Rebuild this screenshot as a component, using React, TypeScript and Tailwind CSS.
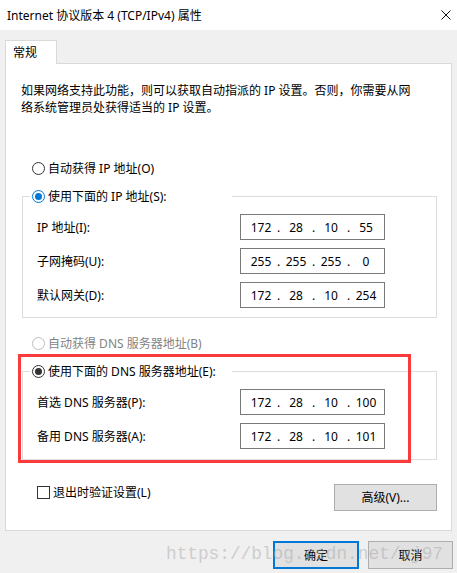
import React from 'react';

type RadioKind = 'off' | 'blue' | 'dark' | 'disabled';

function Radio({ kind }: { kind: RadioKind }) {
  const ring =
    kind === 'blue'
      ? 'border-[#0078d7]'
      : kind === 'disabled'
        ? 'border-[#bcbcbc]'
        : 'border-[#333333]';
  return (
    <span className={`flex h-[13px] w-[13px] shrink-0 items-center justify-center rounded-full border bg-white ${ring}`}>
      {kind === 'blue' && <span className="h-[7px] w-[7px] rounded-full bg-[#0078d7]" />}
      {kind === 'dark' && <span className="h-[7px] w-[7px] rounded-full bg-[#333333]" />}
    </span>
  );
}

function IpBox({ parts }: { parts: string[] }) {
  return (
    <div className="flex h-[26px] w-[145px] items-center border border-[#7a7a7a] bg-white pl-[6px]">
      {parts.map((p, i) => (
        <React.Fragment key={i}>
          {i > 0 && <span className="w-[7px] text-center">.</span>}
          <span className="w-[28px] text-center">{p}</span>
        </React.Fragment>
      ))}
    </div>
  );
}

function Row({ label, parts }: { label: string; parts: string[] }) {
  return (
    <div className="flex h-[26px] items-center pl-[14px]">
      <span className="w-[203px] whitespace-nowrap">{label}</span>
      <IpBox parts={parts} />
    </div>
  );
}

export default function App() {
  return (
    <div className="relative h-[573px] w-[457px] overflow-hidden bg-[#f0f0f0] font-['Noto_Sans','Noto_Sans_CJK_SC',sans-serif] text-[12px] leading-[17px] text-black">
      {/* title bar */}
      <div className="flex h-[30px] items-center justify-between bg-white pl-[7px] pr-[6px]">
        <span>Internet 协议版本 4 (TCP/IPv4) 属性</span>
        <svg width="10" height="10" viewBox="0 0 10 10">
          <path d="M0.5 0.5 L9.5 9.5 M9.5 0.5 L0.5 9.5" stroke="#111" strokeWidth="1" />
        </svg>
      </div>

      <div className="px-[5px] pt-[10px]">
        {/* tab */}
        <div className="relative z-10 -mb-px flex h-[24px] w-[52px] items-center border border-b-0 border-[#d9d9d9] bg-white pl-[7px]">
          常规
        </div>

        {/* panel */}
        <div className="h-[468px] border border-[#d9d9d9] bg-white">
          <p className="pl-[15px] pt-[18px] whitespace-nowrap">
            如果网络支持此功能，则可以获取自动指派的 IP 设置。否则，你需要从网
            <br />
            络系统管理员处获得适当的 IP 设置。
          </p>

          <div className="ml-[26px] mt-[44px] flex h-[17px] items-center gap-[3px]">
            <Radio kind="off" />
            <span>自动获得 IP 地址(O)</span>
          </div>

          <fieldset className="ml-[16px] mr-[14px] mt-[11px] border border-[#dcdcdc] pb-[9px]">
            <legend className="ml-[7px] flex h-[17px] w-[202px] items-center gap-[3px] pl-[2px]">
              <Radio kind="blue" />
              <span>使用下面的 IP 地址(S):</span>
            </legend>
            <div className="flex flex-col gap-[8px] pt-[9px]">
              <Row label="IP 地址(I):" parts={['172', '28', '10', '55']} />
              <Row label="子网掩码(U):" parts={['255', '255', '255', '0']} />
              <Row label="默认网关(D):" parts={['172', '28', '10', '254']} />
            </div>
          </fieldset>

          <div className="ml-[26px] mt-[17px] flex h-[17px] items-center gap-[3px] text-[#838383]">
            <Radio kind="disabled" />
            <span>自动获得 DNS 服务器地址(B)</span>
          </div>

          <fieldset className="ml-[16px] mr-[14px] mt-[11px] border border-[#dcdcdc] pb-[10px]">
            <legend className="ml-[7px] flex h-[17px] w-[202px] items-center gap-[3px] pl-[2px]">
              <Radio kind="dark" />
              <span className="whitespace-nowrap">使用下面的 DNS 服务器地址(E):</span>
            </legend>
            <div className="flex flex-col gap-[8px] pt-[9px]">
              <Row label="首选 DNS 服务器(P):" parts={['172', '28', '10', '100']} />
              <Row label="备用 DNS 服务器(A):" parts={['172', '28', '10', '101']} />
            </div>
          </fieldset>

          <div className="ml-[31px] mr-[14px] mt-[24px] flex items-start justify-between">
            <div className="flex h-[17px] items-center gap-[3px]">
              <span className="h-[13px] w-[13px] border border-[#333333] bg-white" />
              <span>退出时验证设置(L)</span>
            </div>
            <button className="h-[27px] w-[103px] border border-[#adadad] bg-[#e1e1e1]">高级(V)...</button>
          </div>
        </div>
      </div>

      {/* dialog buttons */}
      <div className="mt-[10px] flex justify-end gap-[9px] pr-[4px]">
        <button className="h-[28px] w-[86px] border-2 border-[#0078d7] bg-[#e1e1e1]">确定</button>
        <button className="h-[28px] w-[85px] border border-[#adadad] bg-[#e1e1e1]">取消</button>
      </div>

      {/* annotation box */}
      <div className="pointer-events-none absolute left-[18px] top-[354px] h-[109px] w-[393px] border-[3px] border-[#fb3b3b]" />

      {/* watermark */}
      <div className="pointer-events-none absolute left-[166px] top-[543px] whitespace-nowrap font-['Liberation_Mono',monospace] text-[17.75px] leading-[22px] text-[#a8a8a8]/50">
        https://blog.csdn.net/uj97
      </div>
    </div>
  );
}
